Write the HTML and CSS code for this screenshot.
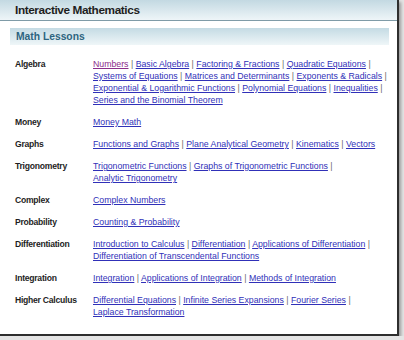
FILE: index.html
```html
<!DOCTYPE html>
<html>
  <head>
    <title>Interactive Mathematics</title>
    <link rel="stylesheet" href="styles.css">
  </head>
  <body>
    <div class="window">
      <header>
        <h1>Interactive Mathematics</h1>
      </header>
      <main>
        <div class="section-title">
          <h2>Math Lessons</h2>
        </div>
        <div class="lessons">
          <div class="topic">Algebra</div>
          <div class="links">
            <a class="visited" href="#">Numbers</a> <span>|</span>
            <a href="#">Basic Algebra</a> <span>|</span>
            <a href="#">Factoring &amp; Fractions</a> <span>|</span>
            <a href="#">Quadratic Equations</a> <span>|</span>
            <a href="#">Systems of Equations</a> <span>|</span>
            <a href="#">Matrices and Determinants</a> <span>|</span>
            <a href="#">Exponents &amp; Radicals</a> <span>|</span>
            <a href="#">Exponential &amp; Logarithmic Functions</a> <span>|</span>
            <a href="#">Polynomial Equations</a> <span>|</span>
            <a href="#">Inequalities</a> <span>|</span>
            <a href="#">Series and the Binomial Theorem</a>
          </div>

          <div class="topic">Money</div>
          <div class="links">
            <a href="#">Money Math</a>
          </div>

          <div class="topic">Graphs</div>
          <div class="links">
            <a href="#">Functions and Graphs</a> <span>|</span>
            <a href="#">Plane Analytical Geometry</a> <span>|</span>
            <a href="#">Kinematics</a> <span>|</span>
            <a href="#">Vectors</a>
          </div>

          <div class="topic">Trigonometry</div>
          <div class="links">
            <a href="#">Trigonometric Functions</a> <span>|</span>
            <a href="#">Graphs of Trigonometric Functions</a> <span>|</span>
            <a href="#">Analytic Trigonometry</a>
          </div>

          <div class="topic">Complex</div>
          <div class="links">
            <a href="#">Complex Numbers</a>
          </div>

          <div class="topic">Probability</div>
          <div class="links">
            <a href="#">Counting &amp; Probability</a>
          </div>

          <div class="topic">Differentiation</div>
          <div class="links">
            <a href="#">Introduction to Calculus</a> <span>|</span>
            <a href="#">Differentiation</a> <span>|</span>
            <a href="#">Applications of Differentiation</a> <span>|</span>
            <a href="#">Differentiation of Transcendental Functions</a>
          </div>

          <div class="topic">Integration</div>
          <div class="links">
            <a href="#">Integration</a> <span>|</span>
            <a href="#">Applications of Integration</a> <span>|</span>
            <a href="#">Methods of Integration</a>
          </div>

          <div class="topic">Higher Calculus</div>
          <div class="links">
            <a href="#">Differential Equations</a> <span>|</span>
            <a href="#">Infinite Series Expansions</a> <span>|</span>
            <a href="#">Fourier Series</a> <span>|</span>
            <a href="#">Laplace Transformation</a>
          </div>
        </div>
      </main>
    </div>
  </body>
</html>
```

FILE: styles.css
```css
* {
  margin: 0;
  padding: 0;
  box-sizing: border-box;
}
body {
  background: #e4e4e4;
  font-family: "Liberation Sans", Arial, sans-serif;
}
.window {
  width: 399px;
  height: 336px;
  background: #fff;
  border-right: 2px solid #2e2e2e;
  border-bottom: 2px solid #2e2e2e;
  box-shadow: 2px 2px 3px #9a9a9a;
}
header {
  height: 21px;
  padding: 3px 15px 0;
  background: linear-gradient(#c3d9e2, #eef5f8);
  border-bottom: 1px solid #7f9ba7;

  h1 {
    font-size: 11.8px;
    font-weight: bold;
    letter-spacing: -0.4px;
    color: #1e1e1e;
    line-height: 15px;
  }
}
main {
  padding: 7px 8px 0 10px;
}
.section-title {
  height: 17px;
  padding: 2px 6px 0;
  background: linear-gradient(#c4dbe4, #eff6f8);

  h2 {
    font-size: 10.3px;
    font-weight: bold;
    color: #2d6480;
    line-height: 13px;
  }
}
.lessons {
  display: grid;
  grid-template-columns: 78px 1fr;
  row-gap: 10px;
  padding: 13px 0 0 5px;
  font-size: 8.75px;
  line-height: 12px;

  .topic {
    font-size: 8.6px;
    font-weight: bold;
    letter-spacing: -0.25px;
    color: #1e1e1e;
  }

  .links {
    color: #6b6b6b;

    a {
      color: #3030b8;
      white-space: nowrap;
    }

    .visited {
      color: #8b2d8b;
    }
  }
}
```
